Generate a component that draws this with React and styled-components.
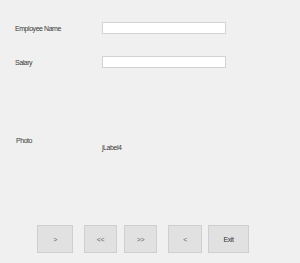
import React from "react";
import styled, { createGlobalStyle } from "styled-components";

const Global = createGlobalStyle`
  body {
    margin: 0;
    background: #f0f0f0;
  }
`;

const Frame = styled.div`
  width: 300px;
  height: 263px;
  background: #f0f0f0;
  display: flex;
  flex-direction: column;
  font-family: "Liberation Sans", Arial, sans-serif;
  font-size: 7px;
  letter-spacing: -0.45px;
  color: #3a3a3a;
  box-sizing: border-box;
`;

const Form = styled.div`
  padding: 22px 0 0 15px;
  display: flex;
  flex-direction: column;
  gap: 22px;
`;

const Row = styled.div`
  display: grid;
  grid-template-columns: 87px 124px;
  align-items: center;
  height: 12px;
`;

const Label = styled.span`
  white-space: nowrap;
  padding-top: 1px;
`;

const Field = styled.input`
  box-sizing: border-box;
  height: 12px;
  width: 124px;
  margin: 0;
  padding: 0 2px;
  background: #fff;
  border: 1px solid #d3d3d3;
  outline: none;
`;

const PhotoRow = styled.div`
  display: grid;
  grid-template-columns: 86px auto;
  padding-left: 16px;
  margin-top: 68px;
`;

const Placeholder = styled.span`
  margin-top: 8px;
`;

const Buttons = styled.div`
  margin-top: auto;
  display: flex;
  align-items: center;
  padding: 0 0 10px 37px;
`;

const Button = styled.button`
  box-sizing: border-box;
  width: ${(p) => p.$w}px;
  height: 28px;
  margin-left: ${(p) => p.$gap || 0}px;
  padding: 0;
  background: #e1e1e1;
  border: 1px solid #cfcfcf;
  font-family: "Liberation Sans", Arial, sans-serif;
  font-size: 7px;
  letter-spacing: -0.45px;
  color: ${(p) => (p.$dark ? "#333" : "#666")};
  cursor: pointer;
`;

export default function App() {
  return (
    <>
      <Global />
      <Frame>
        <Form>
          <Row>
            <Label>Employee Name</Label>
            <Field type="text" />
          </Row>
          <Row>
            <Label>Salary</Label>
            <Field type="text" />
          </Row>
        </Form>
        <PhotoRow>
          <Label>Photo</Label>
          <Placeholder>jLabel4</Placeholder>
        </PhotoRow>
        <Buttons>
          <Button $w={36}>&gt;</Button>
          <Button $w={33} $gap={11}>&lt;&lt;</Button>
          <Button $w={33} $gap={7}>&gt;&gt;</Button>
          <Button $w={34} $gap={11}>&lt;</Button>
          <Button $w={41} $gap={6} $dark>Exit</Button>
        </Buttons>
      </Frame>
    </>
  );
}
